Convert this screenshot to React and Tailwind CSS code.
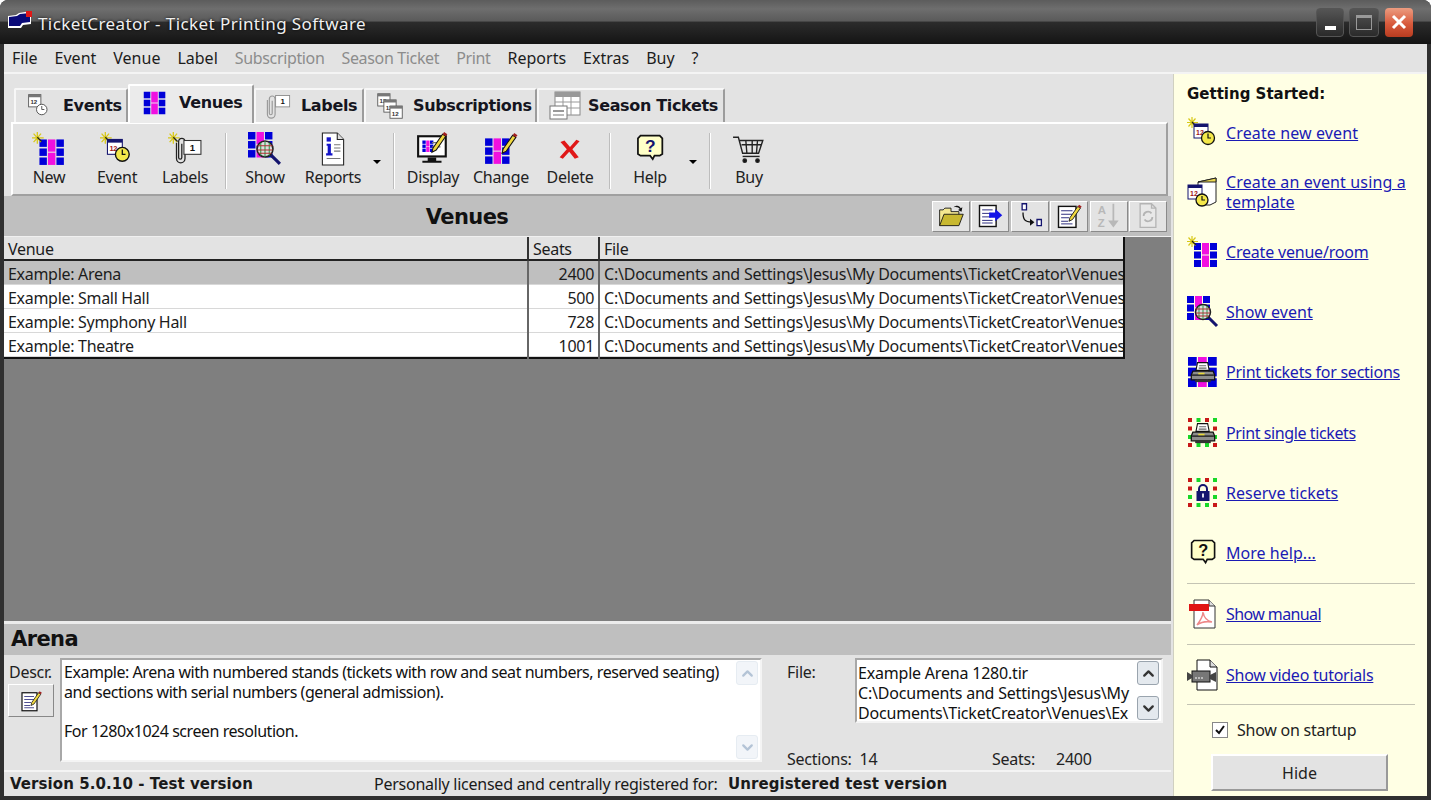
import { ChevronUp, ChevronDown } from "lucide-react";

const ui = "font-['Noto_Sans','Liberation_Sans',sans-serif]";
const heavy = "font-['DejaVu_Sans',sans-serif] font-bold";

// icon parts, all on a 32x32 grid
const Grid = ({ x = 0, y = 0, s = 1 }) => (
  <g transform={`translate(${x} ${y}) scale(${s})`}>
    {[0, 8.5, 17].map((r) => (
      <g key={r}>
        <rect x="0" y={r} width="7" height="7" fill="#0000d8" />
        <rect x="16" y={r} width="7" height="7" fill="#0000d8" />
      </g>
    ))}
    <rect x="8" y="0" width="7" height="11.5" fill="#f010e0" />
    <rect x="8" y="12.5" width="7" height="11.5" fill="#f010e0" />
  </g>
);

const Spark = () => (
  <g stroke="#d8c818" strokeWidth="1.2">
    <path d="M5 0v11M0 5.5h11M1.5 1.5l7 8M8.5 1.5l-7 8" />
    <path d="M5 5l4 4" stroke="#222" />
  </g>
);

const Clock = ({ x = 22, y = 23, r = 6 }) => (
  <g>
    <circle cx={x} cy={y} r={r} fill="#f4e84a" stroke="#111" strokeWidth="1.3" />
    <path d={`M${x} ${y - r + 2}V${y}h3`} fill="none" stroke="#111" strokeWidth="1.2" />
  </g>
);

const Cal = ({ x = 8, y = 10, plain }) => (
  <g>
    <rect x={x} y={y} width="14" height="14" fill="#fff" stroke={plain ? "#555" : "#14146e"} />
    <rect x={x} y={y} width="14" height="3" fill={plain ? "#777" : "#14146e"} />
    <text x={x + 2} y={y + 11} fontSize="7" fontWeight="700" fill={plain ? "#333" : "#a01414"} fontFamily="Liberation Sans">12</text>
  </g>
);

const Clip = ({ c = "#222" }) => (
  <path d="M6 10v15a4 4 0 0 0 8 0V9a3 3 0 0 0-6 0v15a1.2 1.2 0 0 0 3 0V11" fill="none" stroke={c} strokeWidth="1.2" />
);

const Card = ({ x = 14, y = 10, c = "#333" }) => (
  <g>
    <rect x={x} y={y} width="16" height="13" fill="#fff" stroke={c} />
    <text x={x + 5.5} y={y + 10} fontSize="9" fontWeight="700" fill="#111" fontFamily="Liberation Sans">1</text>
  </g>
);

const Lens = () => (
  <g>
    <path d="M21 21l9 9" stroke="#14146e" strokeWidth="3" />
    <circle cx="16" cy="16" r="7.5" fill="#ddd" stroke="#222" strokeWidth="1.5" />
    <path d="M12 10v12M16 9v14M20 10v12" stroke="#2a9a4a" strokeWidth="1" />
    <path d="M9 13h14M9 17h14M10 20h12" stroke="#b03030" strokeWidth="1" />
  </g>
);

const Pencil = ({ x = 0, y = 0 }) => (
  <g transform={`translate(${x} ${y})`}>
    <path d="M18 18l9-13 3 2-9 13-4 2z" fill="#f0d840" stroke="#111" strokeWidth="1" />
    <path d="M27 5l1.5-2 3 2-1.5 2z" fill="#a02020" />
  </g>
);

const Printer = () => (
  <g transform="translate(3.5 3.5) scale(0.78)">
    <path d="M9 4h13l2 10H7z" fill="#fff" stroke="#111" strokeWidth="1.4" />
    <path d="M11 8h9M10.5 11h10" stroke="#666" strokeWidth="1.4" />
    <path d="M3 15h26l2 5v6H1v-6z" fill="#8c8c8c" stroke="#111" strokeWidth="1.6" />
    <path d="M2 20h28" stroke="#111" strokeWidth="1.6" />
    <rect x="10" y="17" width="8" height="2" fill="#e8d838" />
    <rect x="6" y="26" width="20" height="3" fill="#333" />
  </g>
);

const dots = [
  [1, 1, 0], [9.5, 1, 1], [18, 1, 0], [26, 1, 1], [1, 9.5, 0], [26, 9.5, 0], [1, 18, 1], [26, 18, 1],
  [1, 26, 0], [9.5, 26, 1], [18, 26, 1], [26, 26, 0],
];
const Dots = () => dots.map(([x, y, g]) => (
  <rect key={`${x}-${y}`} x={x} y={y} width="4" height="4" fill={g ? "#18d828" : "#c81818"} />
));

const Balloon = ({ c }) => (
  <g>
    <path d="M5 3h22l3 3v18l-3 2h-6l-2 4-3-4H5l-3-2V6z" fill="#ffffc8" stroke="#111" strokeWidth="2" />
    <text x="10" y="22" fontSize="20" fontWeight="700" fill={c} fontFamily="Liberation Sans">?</text>
  </g>
);

const icons = {
  events: <g><Cal x={3} y={3} plain /><circle cx="18" cy="20" r="6" fill="#fff" stroke="#444" /><path d="M18 16v4h3" fill="none" stroke="#444" /></g>,
  venues: <Grid x={4} y={4} />,
  labels: <g><g transform="translate(-5 -2) scale(1.1)"><Clip c="#999" /></g><Card x={11} y={4} c="#888" /></g>,
  subs: <g><Cal x={2} y={2} plain /><Cal x={9} y={9} plain /><Cal x={16} y={16} plain /></g>,
  season: <g><rect x="6" y="2" width="25" height="23" fill="#fff" stroke="#888" /><rect x="6" y="2" width="25" height="5" fill="#999" /><path d="M6 12h25M6 18h25M14 2v23M22 2v23" stroke="#999" /><rect x="1" y="16" width="17" height="13" fill="#fff" stroke="#777" /><rect x="4" y="20" width="11" height="2" fill="#999" /><rect x="4" y="24" width="11" height="2" fill="#bbb" /></g>,
  newVenue: <g><Grid x={7} y={7} s={1} /><Spark /></g>,
  newEvent: <g><Spark /><Cal x={7} y={7} /><Clock x={21} y={21} r={6.5} /></g>,
  newLabel: <g><Spark /><g transform="translate(2 0)"><Clip /></g><Card x={15} y={8} /></g>,
  show: <g><Grid x={0} y={0} /><Lens /></g>,
  report: <g><path d="M6 1h14l6 6v24H6z" fill="#fff" stroke="#222" /><path d="M20 1v6h6" fill="#ddd" stroke="#222" /><rect x="10" y="5" width="4" height="4" fill="#1414c8" /><path d="M10 11h4v9h1.5v2h-6v-2H11v-7h-1z" fill="#1414c8" /><path d="M17 12h6M17 15h6M17 18h6M10 25h13" stroke="#777" /></g>,
  display: <g><rect x="2" y="4" width="26" height="19" fill="#fff" stroke="#111" strokeWidth="2" /><Grid x={6} y={8} s={0.45} /><path d="M15 10h8M15 14h8" stroke="#777" /><path d="M11 24h8v3h5v2H6v-2h5z" fill="#111" /><Pencil x={-2} y={-3} /></g>,
  change: <g><Grid x={1} y={6} /><Pencil x={0} y={-2} /></g>,
  del: <path transform="translate(4 5) scale(0.75)" d="M4 6l5-2 7 8 8-9 4 2-9 10 8 10-5 2-7-9-8 9-4-2 9-10z" fill="#e01818" />,
  help: <g transform="translate(3 1) scale(0.82)"><Balloon c="#14146e" /></g>,
  helpBlack: <g transform="translate(3 1) scale(0.82)"><Balloon c="#111" /></g>,
  cart: <g fill="none" stroke="#222" strokeWidth="1.3"><path d="M1 5h5l4 15h15l4-12H7M9 12h19M13 8l1 12M19 8v12M24 8l-1 12" /><path d="M10 23h16" /><circle cx="12" cy="27" r="1.6" fill="#111" /><circle cx="24" cy="27" r="1.6" fill="#111" /></g>,
  template: <g><path d="M11 6l18-4v24l-6 3H11z" fill="#fff" stroke="#222" /><path d="M11 6l18-4v4H11z" fill="#ecd850" stroke="#222" /><Cal x={1} y={9} /><Clock x={15} y={24} r={6} /></g>,
  printSections: <g><Grid x={1} y={1} s={1.25} /><Printer /></g>,
  printSingle: <g><Dots /><Printer /></g>,
  lock: <g><Dots /><path d="M12 15v-3a4 4 0 0 1 8 0v3" fill="none" stroke="#14146e" strokeWidth="2" /><rect x="9.5" y="14" width="13" height="10" fill="#14146e" /><rect x="15" y="16.5" width="2" height="4" fill="#dde" /></g>,
  pdf: <g><path d="M7 2h15l6 6v22H7z" fill="#fff" stroke="#333" /><path d="M22 2v6h6" fill="#ddd" stroke="#333" /><rect x="2" y="6" width="20" height="7" fill="#e01414" /><path d="M10 27c3-4 6-10 6-13 1 6 4 9 9 10-6-1-11 0-15 3z" fill="none" stroke="#e88" strokeWidth="1.5" /></g>,
  video: <g><path d="M10 1h13l7 7v23H10z" fill="#fff" stroke="#111" /><path d="M23 1v7h7" fill="#ddd" stroke="#111" /><rect x="5" y="12" width="18" height="11" fill="#777" stroke="#111" /><path d="M0 13l5 3v3l-5 3zM23 16l6-3v10l-6-3z" fill="#444" /><path d="M8 19h9" stroke="#fff" strokeDasharray="2 1" /></g>,
  open: <g><path d="M3 27V9h4l2-2h7v4h9v4" fill="#f4e890" stroke="#111" /><path d="M3 27l5-13h22l-5 13z" fill="#c8b830" stroke="#111" /><path d="M19 6c3-3 7-2 8 1l2-1-1 5-4-2 2-1c-1-2-4-3-7-2" fill="#111" /></g>,
  list: <g><rect x="4" y="4" width="19" height="24" fill="#fff" stroke="#111" strokeWidth="1.6" /><path d="M7 9h12M7 13h10M7 17h10M7 21h12M7 24h12" stroke="#14146e" /><path d="M15 12h7V8l8 7-8 7v-4h-7z" fill="#1414e8" /></g>,
  move: <g><path d="M7 2h5v7H7z" fill="#fff" stroke="#14146e" strokeWidth="1.5" /><path d="M8 12c0 8 2 11 10 11" fill="none" stroke="#111" strokeWidth="1.5" /><path d="M16 19l5 4-5 4z" fill="#111" /><path d="M24 20h5v7h-5z" fill="#fff" stroke="#14146e" strokeWidth="1.5" /></g>,
  edit: <g><rect x="4" y="5" width="20" height="24" fill="#fff" stroke="#111" strokeWidth="1.6" /><path d="M7 10h13M7 14h13M7 18h9M7 22h8M7 25h13" stroke="#14146e" /><Pencil x={-1} y={0} /></g>,
  sort: <g fill="#b8b8b8"><text x="3" y="14" fontSize="13" fontWeight="700" fontFamily="Liberation Sans">A</text><text x="3" y="29" fontSize="13" fontWeight="700" fontFamily="Liberation Sans">Z</text><path d="M20 2h2v19h5l-6 8-6-8h5z" /></g>,
  sync: <g fill="none" stroke="#b4b4b4" strokeWidth="1.5"><path d="M7 2h13l5 5v22H7zM20 2v5h5" fill="#e8e8e8" /><path d="M11 16a5 5 0 0 1 9-3M21 17a5 5 0 0 1-9 3" strokeWidth="2" /></g>,
};

const Icon = ({ name, size = 32, className = "" }) => (
  <svg viewBox="0 0 32 32" width={size} height={size} className={`shrink-0 ${className}`}>
    {icons[name]}
  </svg>
);

const menu = [
  ["File"], ["Event"], ["Venue"], ["Label"], ["Subscription", 1], ["Season Ticket", 1],
  ["Print", 1], ["Reports"], ["Extras"], ["Buy"], ["?"],
];

const tabs = [
  { label: "Events", icon: "events", w: "w-[114px]", size: 28, gap: "gap-[9px]" },
  { label: "Venues", icon: "venues", w: "w-[126px]", size: 30, gap: "gap-[9px]", active: true },
  { label: "Labels", icon: "labels", w: "w-[110px]", size: 28, gap: "gap-[7px]" },
  { label: "Subscriptions", icon: "subs", w: "w-[173px]", size: 28, gap: "gap-[9px]" },
  { label: "Season Tickets", icon: "season", w: "w-[188px]", size: 32, gap: "gap-[7px]" },
];

const ToolBtn = ({ icon, label }) => (
  <div className="w-[68px] flex flex-col items-center text-[16px] tracking-[-0.3px] text-[#222] leading-[20px]">
    <Icon name={icon} size={34} className="mt-[8px]" />
    <span className="mt-[1px]">{label}</span>
  </div>
);

const Sep = ({ ml = "ml-[6px]", mr = "mr-[4px]" }) => (
  <div className={`w-[2px] h-[56px] mt-[9px] bg-[#bdbdbd] border-r border-white ${ml} ${mr}`} />
);

const Caret = ({ w = "w-[20px]" }) => (
  <div className={`${w} flex justify-center pt-[36px]`}>
    <div className="w-0 h-0 border-x-[4px] border-x-transparent border-t-[4px] border-t-black" />
  </div>
);

const rows = [
  ["Example: Arena", "2400", true],
  ["Example: Small Hall", "500"],
  ["Example: Symphony Hall", "728"],
  ["Example: Theatre", "1001"],
];

const path = "C:\\Documents and Settings\\Jesus\\My Documents\\TicketCreator\\Venues\\Example Arena 1280.tir";

const MiniBtn = ({ icon }) => (
  <div className="w-[38px] h-[31px] flex items-center justify-center bg-[#e3e3e3] border border-t-white border-l-white border-r-[#8a8a8a] border-b-[#8a8a8a]">
    <Icon name={icon} size={28} />
  </div>
);

const ScrollBtn = ({ up, faint }) => {
  const Chev = up ? ChevronUp : ChevronDown;
  return (
    <div className={`w-[22px] h-[24px] flex items-center justify-center rounded-[3px] border ${faint ? "border-[#e6ecf2] bg-[#f2f5f9]" : "border-[#9aa4ae] bg-[#e4e9ee]"}`}>
      <Chev size={17} strokeWidth={3.2} color={faint ? "#b4c4d6" : "#333"} />
    </div>
  );
};

const sideLinks = [
  { icon: "newEvent", text: "Create new event", h: "h-[60px]", t: "tracking-[0.12px]" },
  { icon: "template", text: <>Create an event using a<br />template</>, h: "h-[58px]", t: "tracking-[0.14px]" },
  { icon: "newVenue", text: "Create venue/room", h: "h-[62px]", t: "tracking-[-0.2px]" },
  { icon: "show", text: "Show event", h: "h-[58px]", t: "tracking-[0.05px]" },
  { icon: "printSections", text: "Print tickets for sections", h: "h-[62px]", t: "tracking-[-0.25px]" },
  { icon: "printSingle", text: "Print single tickets", h: "h-[60px]", t: "tracking-[-0.4px]" },
  { icon: "lock", text: "Reserve tickets", h: "h-[60px]", t: "tracking-[0px]" },
];

const SideLink = ({ icon, text, h = "", t = "tracking-[-0.25px]" }) => (
  <div className={`flex items-center gap-[7px] ${h}`}>
    <Icon name={icon} size={32} />
    <a className={`text-[#1a1ab4] underline text-[16px] leading-[20px] whitespace-nowrap ${t}`}>{text}</a>
  </div>
);

export default function App() {
  return (
    <div className={`${ui} w-[1431px] h-[800px] bg-white overflow-hidden`}>
      <div className="w-full h-full flex flex-col rounded-t-[8px] overflow-hidden bg-[#303030] px-[4px] pb-[4px]">
        {/* Title bar */}
        <div className="-mx-[4px] h-[44px] shrink-0 flex items-center bg-[linear-gradient(#5c5c5c_0%,#6e6e6e_20%,#5a5a5a_48%,#2c2c2c_50%,#141414_100%)]">
          <svg viewBox="0 0 26 20" width="26" height="20" className="ml-[7px] mb-[6px]">
            <path d="M1 7l8-1 3-2 12-2v13l-8 1-2 3H1z" fill="#fff" />
            <path d="M2 8l8-1 3-2 10-1v9l-8 1-2 3H2z" fill="#0a0a78" />
            <rect x="19" y="2" width="6" height="6" fill="#e01818" />
          </svg>
          <span className="ml-[5px] mt-[4px] text-[17px] text-[#f0f0f0] tracking-[0.42px] [text-shadow:0_0_3px_#000]">TicketCreator - Ticket Printing Software</span>
          <div className="ml-auto mr-[18px] flex items-center gap-[5px]">
            <div className="w-[28px] h-[29px] rounded-[4px] border border-[#555] bg-[linear-gradient(#555,#2a2a2a)] flex items-end justify-center pb-[6px]">
              <div className="w-[11px] h-[4px] bg-white" />
            </div>
            <div className="w-[30px] h-[29px] rounded-[4px] border border-[#555] bg-[linear-gradient(#555,#2a2a2a)] flex items-center justify-center">
              <div className="w-[16px] h-[15px] border border-[#999] border-t-[3px]" />
            </div>
            <div className="w-[28px] h-[29px] ml-[1px] rounded-[4px] bg-[linear-gradient(#ec9c80,#d85a3c_55%,#b83c20)] flex items-center justify-center">
              <svg viewBox="0 0 16 16" width="16" height="16"><path d="M2 2l12 12M14 2L2 14" stroke="#fff" strokeWidth="3" /></svg>
            </div>
          </div>
        </div>

        {/* Menu */}
        <div className="h-[30px] shrink-0 flex items-center bg-[#e3e3e3] border-b-2 border-[#f4f4f4] pl-[8px] pb-[1px] gap-[17px] text-[16px]">
          {menu.map(([m, off]) => (
            <span key={m} className={off ? "text-[#8c8c8c] tracking-[-0.35px]" : "text-[#1c1c1c]"}>{m}</span>
          ))}
        </div>

        <div className="flex flex-1 min-h-0 bg-[#e3e3e3]">
          {/* Main column */}
          <div className="w-[1167px] flex flex-col shrink-0">
            {/* Tabs */}
            <div className="h-[48px] shrink-0 flex items-end pl-[10px]">
              {tabs.map((t) => (
                <div
                  key={t.label}
                  className={`${t.w} ${t.gap} flex items-center pl-[10px] border-r-2 border-[#9c9c9c] rounded-t-[2px] ${t.active ? "h-[39px] bg-[#ebebeb] border-t-2 border-l-2 border-white border-r-[#9c9c9c] -mb-[1px] relative pb-[4px]" : "h-[34px] border-t-2 border-l-2 border-t-[#f7f7f7] border-l-[#f7f7f7]"}`}
                >
                  <Icon name={t.icon} size={t.size} />
                  <span className={`${heavy} text-[16px] tracking-[-0.35px] text-[#151520] whitespace-nowrap`}>{t.label}</span>
                </div>
              ))}
            </div>

            {/* Toolbar */}
            <div className="ml-[7px] w-[1157px] h-[74px] shrink-0 flex pl-[2px] border-2 border-t-white border-l-white border-r-[#a0a0a0] border-b-[#a0a0a0] bg-[#e3e3e3]">
              <ToolBtn icon="newVenue" label="New" />
              <ToolBtn icon="newEvent" label="Event" />
              <ToolBtn icon="newLabel" label="Labels" />
              <Sep />
              <ToolBtn icon="show" label="Show" />
              <ToolBtn icon="report" label="Reports" />
              <Caret />
              <Sep />
              <ToolBtn icon="display" label="Display" />
              <ToolBtn icon="change" label="Change" />
              <div className="ml-[1px]"><ToolBtn icon="del" label="Delete" /></div>
              <Sep ml="ml-[5px]" mr="mr-[5px]" />
              <ToolBtn icon="help" label="Help" />
              <Caret w="w-[18px]" />
              <Sep ml="ml-[7px]" mr="mr-[4px]" />
              <ToolBtn icon="cart" label="Buy" />
            </div>

            {/* Venues header */}
            <div className="h-[40px] shrink-0 flex items-center bg-[#bfbfbf] pr-[4px]">
              <div className={`${heavy} w-[926px] pt-[3px] text-center text-[21px] tracking-[-0.6px] text-[#111]`}>Venues</div>
              <div className="ml-auto flex gap-[1.4px]">
                <MiniBtn icon="open" />
                <MiniBtn icon="list" />
                <MiniBtn icon="move" />
                <MiniBtn icon="edit" />
                <MiniBtn icon="sort" />
                <MiniBtn icon="sync" />
              </div>
            </div>

            {/* Table area */}
            <div className="h-[388px] shrink-0 bg-[#7f7f7f] border-t border-[#f0f0f0] border-b-[3px] border-b-[#ececec]">
              <div className="w-[1121px] border-r-2 border-[#111] text-[16px] tracking-[-0.3px] text-[#1c1c1c] leading-[24px]">
                <div className="grid grid-cols-[525px_71px_1fr] h-[24px] bg-[#e3e3e3] border-b-2 border-[#222]">
                  <span className="pl-[4px] border-r-2 border-[#333]">Venue</span>
                  <span className="pl-[4px] border-r-2 border-[#333]">Seats</span>
                  <span className="pl-[4px]">File</span>
                </div>
                {rows.map(([n, s, sel]) => (
                  <div key={n} className={`grid grid-cols-[525px_71px_1fr] h-[24px] leading-[26px] border-b border-[#d8d8d8] ${sel ? "bg-[#bfbfbf]" : "bg-white"}`}>
                    <span className="pl-[4px] border-r-2 border-[#666]">{n}</span>
                    <span className="pr-[4px] text-right border-r-2 border-[#666]">{s}</span>
                    <span className="pl-[4px] overflow-hidden whitespace-nowrap tracking-[-0.22px]">{path}</span>
                  </div>
                ))}
                <div className="h-[2px] bg-[#111]" />
              </div>
            </div>

            {/* Details */}
            <div className={`${heavy} h-[31px] shrink-0 pl-[7px] bg-[#bfbfbf] text-[21px] leading-[31px] tracking-[-0.6px] text-[#111]`}>Arena</div>
            <div className="h-[115px] shrink-0 flex text-[16px] tracking-[-0.25px] text-[#222] leading-[20px]">
              <div className="w-[56px] pl-[4px] pt-[7px] shrink-0">
                <div className="whitespace-nowrap pl-[1px]">Descr.</div>
                <div className="mt-[2px] w-[46px] h-[33px] flex items-center justify-center border border-t-white border-l-white border-r-[#888] border-b-[#888]">
                  <Icon name="edit" size={24} />
                </div>
              </div>
              <div className="mt-[3px] w-[702px] h-[104px] shrink-0 flex bg-white border-2 border-t-[#a8a8a8] border-l-[#a8a8a8] border-r-[#f4f4f4] border-b-[#f4f4f4]">
                <div className="flex-1 pl-[2px] pt-[3px] text-[#111] whitespace-nowrap tracking-[-0.46px] leading-[19.7px]">
                  Example: Arena with numbered stands (tickets with row and seat numbers, reserved seating)<br />
                  and sections with serial numbers (general admission).<br /><br />
                  For 1280x1024 screen resolution.
                </div>
                <div className="w-[26px] flex flex-col justify-between items-center py-[1px]">
                  <ScrollBtn up faint />
                  <ScrollBtn faint />
                </div>
              </div>
              <div className="ml-[25px] flex-1 flex flex-col pt-[7px]">
                <div className="flex items-start">
                  <span className="w-[68px]">File:</span>
                  <div className="-mt-[4px] w-[308px] h-[65px] flex bg-white border-2 border-t-[#a8a8a8] border-l-[#a8a8a8] border-r-[#f4f4f4] border-b-[#f4f4f4] overflow-hidden">
                    <div className="flex-1 pl-[1px] pt-[3px] text-[#111] whitespace-nowrap overflow-hidden tracking-[-0.2px]">
                      Example Arena 1280.tir<br />
                      C:\Documents and Settings\Jesus\My<br />
                      Documents\TicketCreator\Venues\Ex
                    </div>
                    <div className="w-[26px] flex flex-col justify-between items-center py-[1px]">
                      <ScrollBtn up />
                      <ScrollBtn />
                    </div>
                  </div>
                </div>
                <div className="mt-[26px] flex">
                  <span className="w-[205px]">Sections:&nbsp; 14</span>
                  <span className="w-[64px]">Seats:</span>
                  <span>2400</span>
                </div>
              </div>
            </div>

            {/* Status bar */}
            <div className="flex-1 flex items-center border-t-2 border-[#f4f4f4] pl-[6px] text-[16px] tracking-[-0.25px] text-[#1a1a1a]">
              <span className={`${heavy} w-[364px] text-[15px] tracking-[0.08px]`}>Version 5.0.10 - Test version</span>
              <span className="w-[354px]">Personally licensed and centrally registered for:</span>
              <span className={`${heavy} text-[15px] tracking-[0.08px]`}>Unregistered test version</span>
            </div>
          </div>

          {/* Sidebar */}
          <div className="ml-[2px] flex-1 bg-[#ffffe4] border-l border-[#d0d0c0] pl-[13px] pr-[12px] flex flex-col">
            <div className={`${heavy} text-[15px] tracking-[0px] text-[#111] pt-[10px] h-[29px] leading-[20px] whitespace-nowrap`}>Getting Started:</div>
            {sideLinks.map((l) => <SideLink key={l.icon} {...l} />)}
            <SideLink icon="helpBlack" text="More help..." h="h-[60px]" t="tracking-[0.03px]" />
            <div className="h-px shrink-0 bg-[#c4c4b4]" />
            <SideLink icon="pdf" text="Show manual" h="h-[60px]" t="tracking-[-0.6px]" />
            <div className="h-px shrink-0 bg-[#c4c4b4]" />
            <SideLink icon="video" text="Show video tutorials" h="h-[59px]" />
            <div className="h-px shrink-0 bg-[#c4c4b4]" />
            <div className="h-[50px] shrink-0 flex items-center pl-[25px] gap-[9px] text-[16px] tracking-[-0.25px] text-[#222]">
              <div className="w-[16px] h-[16px] bg-white border border-[#888] flex items-center justify-center">
                <svg viewBox="0 0 12 12" width="12" height="12"><path d="M2 6l3 3 5-7" fill="none" stroke="#111" strokeWidth="2" /></svg>
              </div>
              Show on startup
            </div>
            <div className="ml-[24px] -mt-[1px] w-[177px] h-[37px] shrink-0 flex items-center justify-center bg-[#e3e3e3] border-2 border-t-white border-l-white border-r-[#999] border-b-[#999] text-[16px] text-[#222]">Hide</div>
          </div>
        </div>
      </div>
    </div>
  );
}
